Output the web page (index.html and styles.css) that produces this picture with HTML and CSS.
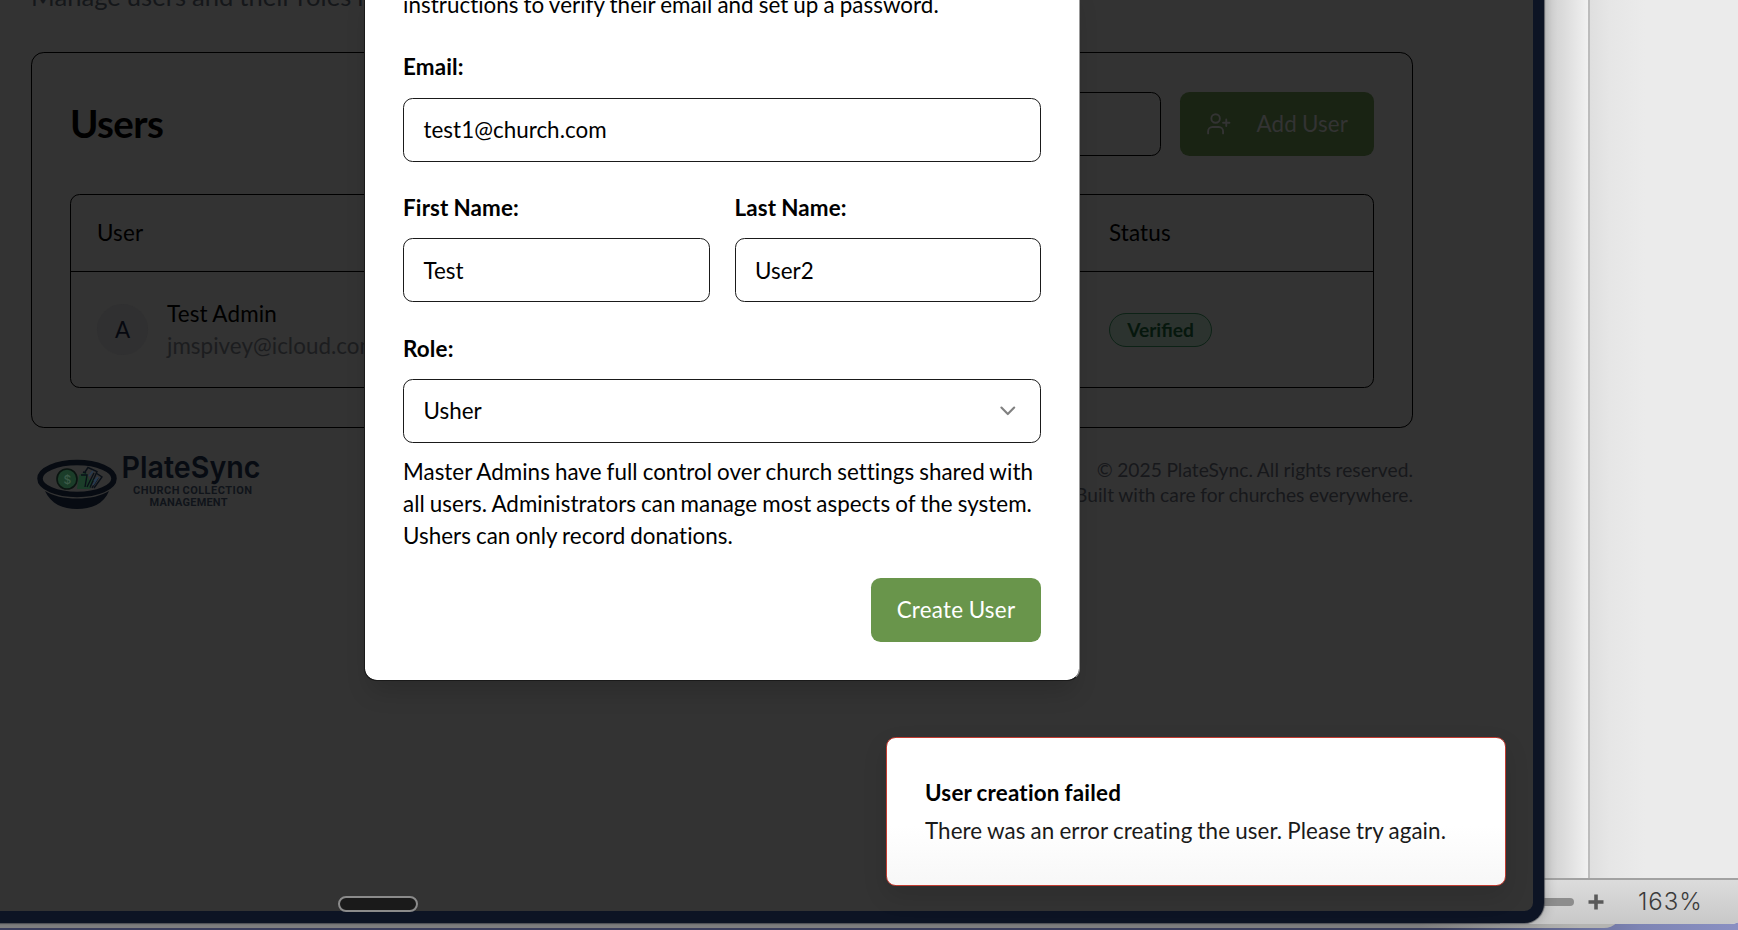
FILE: index.html
```html
<!DOCTYPE html>
<html lang="en">
<head>
<meta charset="utf-8">
<title>PlateSync</title>
<link rel="stylesheet" href="styles.css">
</head>
<body>
<div class="desktop">
  <div class="back-window"></div>
  <div class="doc-window">
    <div class="doc-body">
      <div class="doc-gutter"></div>
      <div class="doc-side"></div>
    </div>
    <div class="doc-status">
      <div class="slider"></div>
      <svg class="plus" width="16" height="16" viewBox="0 0 16 16"><path d="M8 .5v15M.5 8h15" stroke="#5a5a5a" stroke-width="3.6"/></svg>
      <span class="zoom">163%</span>
    </div>
  </div>

  <div class="app-window">
    <main class="page">
      <p class="subtitle">Manage users and their roles in</p>
      <section class="card">
        <header class="card-head">
          <h1 class="card-title">Users</h1>
          <div class="card-actions">
            <div class="search"></div>
            <div class="add-btn">
              <svg width="25.6" height="25.6" viewBox="0 0 24 24" fill="none" stroke="currentColor" stroke-width="1.8" stroke-linecap="round" stroke-linejoin="round"><path d="M16 21v-2a4 4 0 0 0-4-4H6a4 4 0 0 0-4 4v2"/><circle cx="9" cy="7" r="4"/><path d="M19 8v6M22 11h-6"/></svg>
              <span>Add User</span>
            </div>
          </div>
        </header>
        <div class="table">
          <div class="row row-head"><div>User</div><div>Status</div></div>
          <div class="row row-user">
            <div class="user">
              <div class="avatar">A</div>
              <div><div class="name">Test Admin</div><div class="email">jmspivey@icloud.com</div></div>
            </div>
            <div><span class="badge">Verified</span></div>
          </div>
        </div>
      </section>
      <footer class="footer">
        <svg class="logo" width="240" height="66" viewBox="31 448 240 66">
          <path d="M45 491c6 13 18 18 32 18s27-5 32-18c-8 5-19 7.500-32 7.500s-24-2.500-32-7.500z" fill="#070b12"/>
          <ellipse cx="77" cy="478.500" rx="37" ry="16" fill="none" stroke="#070b12" stroke-width="5.500"/>
          <path d="M79 475l7-3 3 8 6-2-5 11H77z" fill="#1b3d29"/>
          <path d="M86 473l-3-1M81 475l6 0-2 12M85 472l3-4.500 9 4-7 16M87 487l7-14M96 473l6 4-8 11M92 488l6-10" fill="none" stroke="#0a1018" stroke-width="1.400"/>
          <path d="M89 476l4-5M94 481l4-4-5 8" fill="none" stroke="#273a50" stroke-width="1.600"/>
          <circle cx="67" cy="479" r="10" fill="#1b3d29" stroke="#0a1410" stroke-width="1.600"/>
          <text x="67.500" y="483.500" class="dollar">$</text>
          <text x="121.500" y="477.500" class="brand" textLength="139" lengthAdjust="spacingAndGlyphs">PlateSync</text>
          <text x="133" y="494" class="tagline" textLength="119">CHURCH COLLECTION</text>
          <text x="149.500" y="506" class="tagline" textLength="78">MANAGEMENT</text>
        </svg>
        <div class="legal"><div>© 2025 PlateSync. All rights reserved.</div><div>Built with care for churches everywhere.</div></div>
      </footer>
    </main>

    <div class="modal">
      <p class="modal-intro">instructions to verify their email and set up a password.</p>
      <label class="label label-email">Email:</label>
      <div class="input">test1@church.com</div>
      <div class="names">
        <div><label class="label">First Name:</label><div class="input input-name">Test</div></div>
        <div><label class="label">Last Name:</label><div class="input input-name">User2</div></div>
      </div>
      <label class="label">Role:</label>
      <div class="input select"><span>Usher</span>
        <svg width="25.6" height="25.6" viewBox="0 0 24 24" fill="none" stroke="#808080" stroke-width="2" stroke-linecap="round" stroke-linejoin="round"><path d="m6 9 6 6 6-6"/></svg>
      </div>
      <p class="help">Master Admins have full control over church settings shared with all users. Administrators can manage most aspects of the system. Ushers can only record donations.</p>
      <div class="modal-foot"><div class="create-btn">Create User</div></div>
    </div>

    <div class="toast">
      <div class="toast-title">User creation failed</div>
      <div class="toast-text">There was an error creating the user. Please try again.</div>
    </div>
    <div class="scroll-pill"></div>
  </div>
</div>
</body>
</html>
```
FILE: styles.css
```css
* { box-sizing: border-box; }
body { margin: 0; font-family: Lato, sans-serif; font-size: 22.4px; line-height: 32px; word-spacing: -.7px; letter-spacing: .03px; font-variant-ligatures: none; color: #000; }
p, h1 { margin: 0; }
.desktop { position: relative; width: 1738px; height: 930px; overflow: hidden; background: linear-gradient(90deg, #3d4160 0, #3d4160 1440px, #7d84b4 1640px, #8a90c2); }

/* windows behind the browser */
.back-window { position: absolute; left: -20px; top: 800px; width: 1642px; height: 128px; border-radius: 0 0 18px 18px; background: linear-gradient(90deg, #858585 0, #858585 1440px, #b4b4b2 1600px); }
.doc-window { position: absolute; left: 1500px; top: 0; width: 250px; height: 924px; border-radius: 0 0 20px 0; overflow: hidden; display: flex; flex-direction: column; background: #ebebeb; }
.doc-body { display: flex; height: 878px; }
.doc-gutter { width: 90px; border-right: 2px solid #bcbcbc; background: linear-gradient(90deg, #cfcfcf 44px, #dadada 62px, #f1f1f1 88px); }
.doc-side { flex: 1; background: linear-gradient(90deg, #dfdfdf, #e6e6e6 20px, #ebebeb 55px); }
.doc-status { height: 46px; border-top: 2px solid #a2a2a2; background: linear-gradient(#dcdcdc, #c8c8c8); display: flex; align-items: center; padding: 0 0 0 30px; }
.slider { width: 44px; height: 8px; border-radius: 4px; background: #8d8d8d; }
.plus { margin-left: 14px; }
.zoom { margin-left: 34px; font: 300 24px/30px Inter, sans-serif; letter-spacing: .9px; color: #3c3c3c; }

/* browser window */
.app-window { position: absolute; left: -20px; top: -20px; width: 1564px; height: 943px; padding: 20px 0 0 20px; border-right: 11px solid #0d1424; border-bottom: 12px solid #0d1424; border-radius: 0 0 20px 0; background: #333; box-shadow: 0 0 1px 1px rgba(60, 62, 70, .7), 2px 0 12px rgba(0, 0, 0, .2); }
.page { width: 1413px; padding-left: 31px; }
.subtitle { margin-top: -23px; height: 75px; font-size: 25.6px; line-height: 38px; color: #15171a; white-space: nowrap; }
.card { height: 376px; border: 1px solid #000; border-radius: 12.8px; padding: 39px 38px 0; }
.card-head { display: flex; justify-content: space-between; height: 64px; }
.card-title { font-size: 38.4px; line-height: 63px; font-weight: 700; letter-spacing: -.6px; }
.card-actions { display: flex; gap: 19px; }
.search { width: 410px; border: 1px solid #000; border-radius: 9.6px; }
.add-btn { display: flex; align-items: center; gap: 25px; width: 194px; padding-left: 26px; border-radius: 9.6px; background: #192313; color: #333; letter-spacing: .1px; }
.add-btn svg { flex: none; }
.table { margin-top: 38px; height: 194px; border: 1px solid #000; border-radius: 9.6px; }
.row { display: grid; grid-template-columns: 1012px 1fr; padding: 0 26px; align-items: center; }
.row-head { height: 77px; border-bottom: 1px solid #000; letter-spacing: .15px; }
.row-user { height: 115px; }
.user { display: flex; align-items: center; gap: 19px; }
.avatar { width: 51px; height: 51px; border-radius: 50%; background: #303031; color: #06080f; text-align: center; line-height: 51px; }
.name { letter-spacing: .2px; }
.email { color: #1c1d1f; }
.badge { display: block; width: 103px; height: 34px; border: 1px solid #0d2216; border-radius: 17px; background: #2c332f; color: #06170d; font-size: 19.2px; font-weight: 700; line-height: 32px; letter-spacing: 0; text-align: center; font-variant-ligatures: normal; }
.footer { display: flex; justify-content: space-between; margin-top: 20px; }
.brand { font: 600 30.5px Inter, sans-serif; fill: #070b12; }
.tagline { font: 700 11px Roboto, sans-serif; fill: #10141a; }
.dollar { font: 500 12px Inter, sans-serif; fill: #3c5a48; text-anchor: middle; }
.legal { font-size: 19.2px; line-height: 25px; padding-top: 9px; text-align: right; word-spacing: -.4px; color: #17181b; }

/* create-user dialog */
.modal { position: absolute; left: 384px; top: 0; width: 716px; height: 701px; padding: 8px 38px 0; border: 1px solid #1a1a1a; border-right-color: #999; border-radius: 12.8px; background: #fff; background-clip: padding-box; box-shadow: 0 16px 24px -6px rgba(0, 0, 0, .16); }
.modal-intro { height: 62px; }
.label { display: block; height: 46px; font-weight: 700; letter-spacing: .15px; }
.label-email { height: 47px; }
.input { height: 64px; border: 1px solid #1a1a1a; border-radius: 9.6px; padding: 0 19.5px; line-height: 62px; }
.input-name { line-height: 63px; }
.names { display: grid; grid-template-columns: 1fr 1fr; gap: 25px; margin: 30px 0 31px; }
.select { display: flex; align-items: center; justify-content: space-between; }
.help { margin-top: 13px; }
.modal-foot { display: flex; justify-content: flex-end; margin-top: 26px; }
.create-btn { width: 170px; height: 64px; border-radius: 9.6px; background: #69954b; color: #fff; line-height: 64px; text-align: center; letter-spacing: .25px; }

/* notification */
.toast { position: absolute; left: 906px; top: 757px; width: 620px; height: 149px; padding: 39px 38px; border: 1px solid #c23b30; border-radius: 9.6px; background: linear-gradient(#fff 60%, #f7f7f7); box-shadow: 0 10px 24px rgba(0, 0, 0, .12); }
.toast-title { font-weight: 700; letter-spacing: .2px; }
.toast-text { margin-top: 6px; letter-spacing: .08px; color: #1a1a1a; }
.scroll-pill { position: absolute; left: 358px; top: 916px; width: 80px; height: 16px; border: 2px solid #8b8b8b; border-radius: 8px; background: #1a1a1a; }
```
